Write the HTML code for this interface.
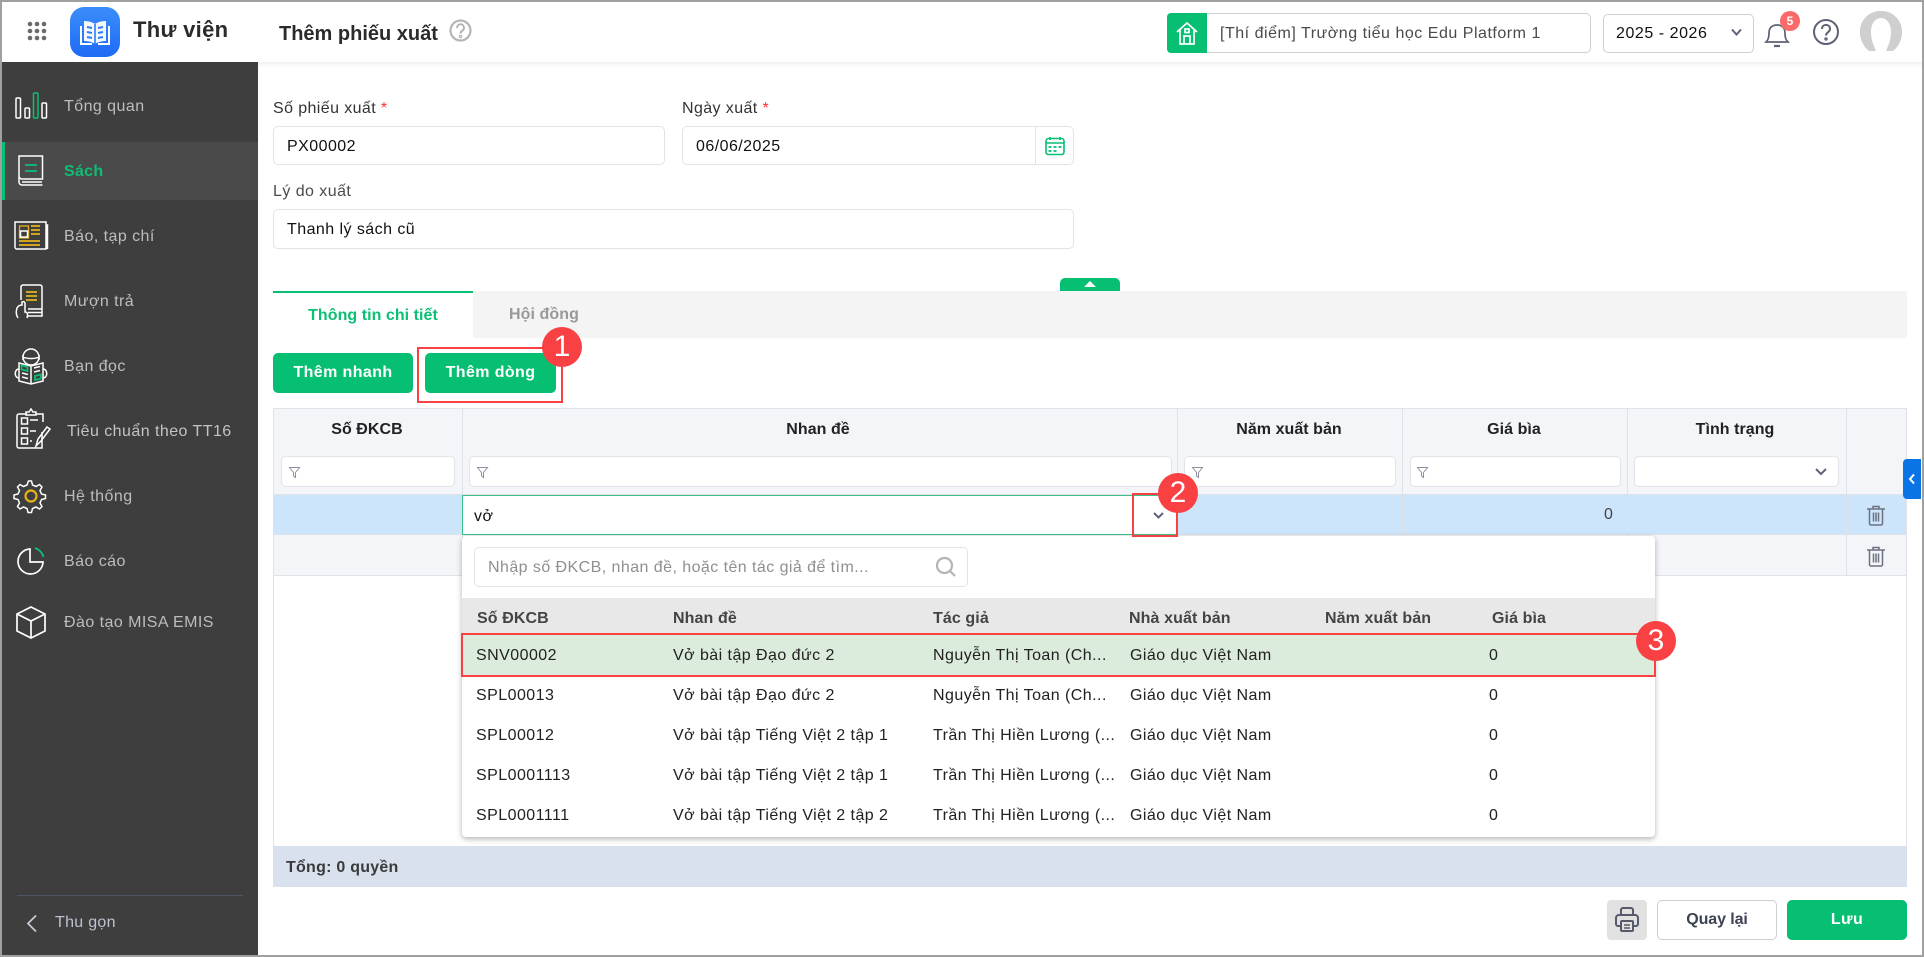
<!DOCTYPE html>
<html lang="vi"><head><meta charset="utf-8"><title>Thêm phiếu xuất</title>
<style>
*{box-sizing:border-box}
html,body{margin:0;padding:0;width:1924px;height:957px;overflow:hidden;background:#fff;font-family:"Liberation Sans",sans-serif;font-size:16px;color:#212121}
.a{position:absolute}
.t{position:absolute;white-space:nowrap;transform:translateY(calc(-50% + 1px));letter-spacing:.45px;line-height:20px}
.c{transform:translate(-50%,calc(-50% + 1px))}
.b{font-weight:700}
.nav{color:#bdbdbd}
.box{position:absolute;background:#fff;border:1px solid #e2e3e8;border-radius:5px}
.btn{position:absolute;background:#06bf72;border-radius:5px;height:40px;color:#fff;font-weight:700;text-align:center;line-height:40px;letter-spacing:.4px}
.red{position:absolute;border:2px solid #f94144}
.num{position:absolute;width:40px;height:40px;border-radius:50%;background:#f94144;color:#fff;font-size:30px;line-height:40px;text-align:center;margin:-20px 0 0 -20px;z-index:9}
.l{position:absolute;background:#e0e2ea}
svg{position:absolute;overflow:visible}
</style></head><body>

<!-- header -->
<div class="a" style="left:0;top:0;width:1924px;height:62px;background:#fff;box-shadow:0 1px 6px rgba(0,0,0,.1)"></div>
<svg style="left:27px;top:21px" width="20" height="20" fill="#6b6b6b"><circle cx="3" cy="3" r="2.3"/><circle cx="10" cy="3" r="2.3"/><circle cx="17" cy="3" r="2.3"/><circle cx="3" cy="10" r="2.3"/><circle cx="10" cy="10" r="2.3"/><circle cx="17" cy="10" r="2.3"/><circle cx="3" cy="17" r="2.3"/><circle cx="10" cy="17" r="2.3"/><circle cx="17" cy="17" r="2.3"/></svg>
<div class="a" style="left:70px;top:7px;width:50px;height:50px;border-radius:14px;background:linear-gradient(#3b8dfb,#1f6bf5)"></div>
<svg style="left:70px;top:7px" width="50" height="50" fill="none" stroke="#fff"><path d="M25 17c-3-2-7-3-11-3v20c4 0 8 1 11 3 3-2 7-3 11-3V14c-4 0-8 1-11 3z" fill="#fff" stroke="none" opacity=".95"/><path d="M25 17v20" stroke="#2f7bf8" stroke-width="1.6"/><path d="M17 20l5 1M17 25l5 1M17 30l5 1M33 20l-5 1M33 25l-5 1M33 30l-5 1" stroke="#2f7bf8" stroke-width="2"/><path d="M11 19v18h11M39 19v18H28" stroke-width="2"/></svg>
<div class="t b" style="left:133px;top:29px;font-size:22px;color:#2b2b2b;letter-spacing:.3px">Thư viện</div>
<div class="t b" style="left:279px;top:33px;font-size:20px;color:#2b2b2b;letter-spacing:0">Thêm phiếu xuất</div>
<svg style="left:449px;top:19px" width="23" height="23" fill="none" stroke="#b5b5b5" stroke-width="2.2"><circle cx="11.5" cy="11.5" r="10"/><path d="M8 9c0-5 7-5 7 0 0 3-3.500 2.500-3.500 5.500" stroke-width="2"/><circle cx="11.500" cy="17.500" r=".6"/></svg>

<div class="box" style="left:1167px;top:13px;width:424px;height:40px;border-color:#cfcfcf"></div>
<div class="a" style="left:1167px;top:13px;width:40px;height:40px;background:#06bf72;border-radius:4px 0 0 4px"></div>
<svg style="left:1176px;top:21px" width="24" height="25" fill="none" stroke="#fff" stroke-width="1.700"><path d="M1 11L11 2l10 9M4 9v14h14V9"/><path d="M8 23v-8h6v8"/><rect x="9" y="8" width="4" height="3.500"/></svg>
<div class="t" style="left:1220px;top:33px;color:#4a4a4a;letter-spacing:.52px">[Thí điểm] Trường tiểu học Edu Platform 1</div>
<div class="box" style="left:1603px;top:14px;width:151px;height:39px;border-color:#cfcfcf"></div>
<div class="t" style="left:1616px;top:33px;color:#111;letter-spacing:.55px">2025 - 2026</div>
<svg style="left:1730px;top:28px" width="13" height="9" fill="none" stroke="#5d6375" stroke-width="2"><path d="M2 1.500l4.500 5 4.500-5"/></svg>
<svg style="left:1764px;top:18px" width="26" height="30" fill="none" stroke="#5d6375" stroke-width="1.700"><path d="M2 24c2-2 3-4 3-9 0-5 3-8 8-8 5 0 8 3 8 8 0 5 1 7 3 9z"/><path d="M10 28h6" stroke-width="2.200"/></svg>
<div class="a" style="left:1780px;top:11px;width:20px;height:20px;border-radius:50%;background:#fb6a6a;color:#fff;font-size:12px;font-weight:700;text-align:center;line-height:20px">5</div>
<svg style="left:1813px;top:19px" width="26" height="26" fill="none" stroke="#5d6375" stroke-width="2"><circle cx="13" cy="13" r="12"/><path d="M9 10c0-5.500 8-5.500 8 0 0 3.500-4 3-4 6.500"/><circle cx="13" cy="20" r=".7"/></svg>
<svg style="left:1860px;top:11px" width="42" height="40"><path d="M21 0C9 0 0 9 0 21c0 8 4 15 9 19h6c-4-6-7-11-7-19C8 13 14 7 21 7s13 6 13 14c0 8-3 13-7 19h6c5-4 9-11 9-19C42 9 33 0 21 0z" fill="#cfcfcf"/><ellipse cx="21" cy="22" rx="13" ry="17" fill="#fff"/><path d="M21 0C9 0 0 9 0 21c0 8 4 15 9 19h7c-3-7-5-12-5-19C11 13 15 7 21 7s10 6 10 14c0 7-2 12-5 19h7c5-4 9-11 9-19C42 9 33 0 21 0z" fill="#cfcfcf"/></svg>

<!-- sidebar -->
<div class="a" style="left:2px;top:62px;width:256px;height:893px;background:#3e3e3e"></div>
<div class="a" style="left:2px;top:142px;width:256px;height:58px;background:#4a4a4a"></div>
<div class="a" style="left:2px;top:142px;width:3px;height:58px;background:#06bf72"></div>
<div class="t nav" style="left:64px;top:106px">Tổng quan</div>
<div class="t b" style="left:64px;top:171px;color:#0cbf73;letter-spacing:.3px">Sách</div>
<div class="t nav" style="left:64px;top:236px">Báo, tạp chí</div>
<div class="t nav" style="left:64px;top:301px">Mượn trả</div>
<div class="t nav" style="left:64px;top:366px">Bạn đọc</div>
<div class="t nav" style="left:67px;top:431px;color:#c3c3c3">Tiêu chuẩn theo TT16</div>
<div class="t nav" style="left:64px;top:496px">Hệ thống</div>
<div class="t nav" style="left:64px;top:561px">Báo cáo</div>
<div class="t nav" style="left:64px;top:622px">Đào tạo MISA EMIS</div>

<svg style="left:0;top:0" width="60" height="660" fill="none" stroke="#fff" stroke-width="1.500">
<rect x="16" y="98" width="4.500" height="20" rx="1"/><rect x="25" y="108" width="4.500" height="10" rx="1"/><rect x="33.500" y="93" width="4.500" height="25" rx="1" stroke="#0cbf73"/><rect x="42" y="103" width="4.500" height="15" rx="1"/>
<path d="M42.500 179H22a3 3 0 0 1-3-3V156h23.500zM19 176v6a3 3 0 0 0 3 3h20.500M22 182h20" /><path d="M25 165h12M25 171h12" stroke="#0cbf73" stroke-width="1.800"/>
<path d="M15 222h31v27H17a2 2 0 0 1-2-2zM46 225h1.500v24" /><path d="M31 226h9M31 230h9M31 234h9M19 241h21M19 245h21" stroke="#e6b21c" stroke-width="1.700"/><rect x="19.500" y="226" width="9" height="12" fill="#3e3e3e" stroke="#e6b21c" stroke-width="1.300"/><rect x="20.500" y="231" width="7" height="6" stroke="#fff"/>
<path d="M21 300v-13a2 2 0 0 1 2-2h17a2 2 0 0 1 2 2v29H27M28 309h14M28 312.500h14"/><path d="M26 292h11M26 296h11M26 300h11" stroke="#e6b21c" stroke-width="1.700"/><path d="M18 318c-2-3-2-7-1-10 1-2 3-3 5-3v-3c2-1 3 0 3 2v8c3 0 3 3 2 6"/>
<g transform="translate(0 18)"><ellipse cx="31" cy="339" rx="8" ry="8"/><path d="M23 337v5M39 337v5M23 339c4 2 12 2 16 0"/><path d="M19 345l12 3 12-3v18l-12 3-12-3zM31 348v18M19 351c-5 0-5 9 0 9M43 351c5 0 5 9 0 9M22 355l6 1.500M22 359l6 1.500M34 350l6-1.500M34 354l6-1.500"/><path d="M21.500 347.500l6 1.500v4l-6-1.500zM35 358l6-1.500v4l-6 1.500z" stroke="#0cbf73" stroke-width="1.700"/></g>
<path d="M27 414h-8a2 2 0 0 0-2 2v30a2 2 0 0 0 2 2h23V432M36 414h7v8M26 415v-3h3l2-3 2 3h3v3z"/><rect x="21.500" y="418" width="6" height="6"/><rect x="21.500" y="428" width="6" height="6"/><rect x="21.500" y="438" width="6" height="6"/><path d="M30 420h8M30 431h6M30 441h2M36 446l2-7 9-12 3 2-9 12z"/>
<path d="M28.500 481l3 0 1 4 3.500 1.500 3.500-2 2.500 2.500-2 3.500 1.500 3.500 4 1v3.500l-4 1-1.500 3.500 2 3.500-2.500 2.500-3.500-2-3.500 1.500-1 4h-3.500l-1-4-3.500-1.500-3.500 2-2.500-2.500 2-3.500-1.500-3.500-4-1v-3.500l4-1 1.500-3.500-2-3.500 2.500-2.500 3.500 2 3.500-1.500z"/><circle cx="31" cy="496" r="5.500" stroke="#e6b21c" stroke-width="2.200"/>
<path d="M30 549a12.500 12.500 0 1 0 13 13H30z" stroke-width="1.700"/><path d="M35 548a13 13 0 0 1 8.500 9" stroke="#0cbf73" stroke-width="1.800"/>
<path d="M31 607l14 7v17l-14 7-14-7v-17zM17 614l14 7 14-7M31 621v17" stroke-width="1.700"/>
</svg>

<div class="a" style="left:17px;top:895px;width:226px;height:1px;background:#4e5566"></div>
<svg style="left:26px;top:914px" width="12" height="19" fill="none" stroke="#c5c9d2" stroke-width="1.800"><path d="M10 1.500L2 9.500l8 8"/></svg>
<div class="t" style="left:55px;top:922px;color:#bcc2d0;letter-spacing:.3px">Thu gọn</div>

<!-- form -->
<div class="t" style="left:273px;top:108px;color:#333;letter-spacing:.4px">Số phiếu xuất <span style="color:#f33">*</span></div>
<div class="t" style="left:682px;top:108px;color:#333;letter-spacing:.4px">Ngày xuất <span style="color:#f33">*</span></div>
<div class="box" style="left:273px;top:126px;width:392px;height:39px"></div>
<div class="t" style="left:287px;top:146px;color:#111">PX00002</div>
<div class="box" style="left:682px;top:126px;width:392px;height:39px"></div>
<div class="l" style="left:1035px;top:127px;width:1px;height:37px;background:#e2e3e8"></div>
<div class="t" style="left:696px;top:146px;color:#111">06/06/2025</div>
<svg style="left:1045px;top:137px" width="20" height="18" fill="none" stroke="#06bf72" stroke-width="1.600"><rect x="1" y="1.500" width="18" height="16" rx="2.500"/><path d="M1 6h18M5 0v3M15 0v3" /><path d="M3.500 10h3M8.500 10h3M13.500 10h3M3.500 14h3M8.500 14h3" stroke-width="1.800"/></svg>
<div class="t" style="left:273px;top:191px;color:#4a4a4a">Lý do xuất</div>
<div class="box" style="left:273px;top:209px;width:801px;height:40px"></div>
<div class="t" style="left:287px;top:229px;color:#111">Thanh lý sách cũ</div>
<div class="a" style="left:1060px;top:278px;width:60px;height:13px;background:#06bf72;border-radius:5px 5px 0 0"></div>
<div class="a" style="left:1084px;top:281px;width:0;height:0;border:6px solid transparent;border-top:0;border-bottom:6px solid #fff"></div>

<!-- tabs -->
<div class="a" style="left:473px;top:291px;width:1434px;height:47px;background:#f4f4f4"></div>
<div class="a" style="left:273px;top:291px;width:200px;height:2px;background:#06bf72"></div>
<div class="t b c" style="left:373px;top:315px;color:#0cbf73;letter-spacing:.05px">Thông tin chi tiết</div>
<div class="t b c" style="left:544px;top:314px;color:#999;letter-spacing:.1px">Hội đồng</div>
<div class="btn" style="left:273px;top:353px;width:140px">Thêm nhanh</div>
<div class="btn" style="left:425px;top:353px;width:131px">Thêm dòng</div>
<div class="red" style="left:417px;top:347px;width:146px;height:56px"></div>

<!-- table -->
<div class="a" style="left:273px;top:408px;width:1634px;height:167px;background:#f3f5f9"></div>
<div class="a" style="left:273px;top:495px;width:1634px;height:39px;background:#cce5fb"></div>
<div class="l" style="left:273px;top:408px;width:1634px;height:1px"></div>
<div class="l" style="left:273px;top:494px;width:1634px;height:1px"></div>
<div class="l" style="left:273px;top:534px;width:1634px;height:1px"></div>
<div class="l" style="left:273px;top:575px;width:1634px;height:1px"></div>
<div class="l" style="left:273px;top:408px;width:1px;height:438px"></div>
<div class="l" style="left:1906px;top:408px;width:1px;height:438px"></div>
<div class="l" style="left:462px;top:408px;width:1px;height:167px"></div>
<div class="l" style="left:1177px;top:408px;width:1px;height:167px"></div>
<div class="l" style="left:1402px;top:408px;width:1px;height:167px"></div>
<div class="l" style="left:1627px;top:408px;width:1px;height:167px"></div>
<div class="l" style="left:1846px;top:408px;width:1px;height:167px"></div>
<div class="t b c" style="left:367px;top:429px;color:#222;letter-spacing:.05px">Số ĐKCB</div>
<div class="t b c" style="left:818px;top:429px;color:#222;letter-spacing:.05px">Nhan đề</div>
<div class="t b c" style="left:1289px;top:429px;color:#222;letter-spacing:.05px">Năm xuất bản</div>
<div class="t b c" style="left:1514px;top:429px;color:#222;letter-spacing:.05px">Giá bìa</div>
<div class="t b c" style="left:1735px;top:429px;color:#222;letter-spacing:.05px">Tình trạng</div>
<div class="box" style="left:281px;top:456px;width:174px;height:31px"></div>
<div class="box" style="left:469px;top:456px;width:703px;height:31px"></div>
<div class="box" style="left:1184px;top:456px;width:212px;height:31px"></div>
<div class="box" style="left:1410px;top:456px;width:211px;height:31px"></div>
<div class="box" style="left:1634px;top:456px;width:205px;height:31px"></div>
<svg style="left:0;top:1px" width="1500" height="500" fill="none" stroke="#8d90a0" stroke-width="1"><path d="M289.500 466.500h10l-4 5v5l-2-1.500v-3.500z"/><path d="M477.500 466.500h10l-4 5v5l-2-1.500v-3.500zM1192.500 466.500h10l-4 5v5l-2-1.500v-3.500zM1417.500 466.500h10l-4 5v5l-2-1.500v-3.500z"/></svg>
<svg style="left:1814px;top:467px" width="14" height="10" fill="none" stroke="#5d6375" stroke-width="2"><path d="M2 2l5 5 5-5"/></svg>
<div class="a" style="left:462px;top:495px;width:716px;height:40px;background:#fff;border:1px solid #3cc08a"></div>
<div class="t" style="left:474px;top:516px;color:#111">vở</div>
<svg style="left:1152px;top:511px" width="13" height="9" fill="none" stroke="#5d6375" stroke-width="2"><path d="M2 2l4.500 4.500L11 2"/></svg>
<div class="t" style="left:1604px;top:514px;color:#444">0</div>
<svg style="left:1866px;top:505px" width="20" height="21" fill="none" stroke="#6d7280" stroke-width="1.500"><path d="M1 4h18M7 4V1.500h6V4M3.500 4v14.500a1.500 1.500 0 0 0 1.500 1.500h10a1.500 1.500 0 0 0 1.500-1.500V4M7.500 7.500v9M10 7.500v9M12.500 7.500v9"/></svg>
<svg style="left:1866px;top:546px" width="20" height="21" fill="none" stroke="#6d7280" stroke-width="1.500"><path d="M1 4h18M7 4V1.500h6V4M3.500 4v14.500a1.500 1.500 0 0 0 1.500 1.500h10a1.500 1.500 0 0 0 1.500-1.500V4M7.500 7.500v9M10 7.500v9M12.500 7.500v9"/></svg>
<div class="a" style="left:1903px;top:459px;width:18px;height:40px;background:#0b74e5;border-radius:4px 0 0 4px"></div>
<svg style="left:1908px;top:473px" width="8" height="12" fill="none" stroke="#fff" stroke-width="2"><path d="M6 1.500L2 6l4 4.500"/></svg>

<!-- footer row -->
<div class="a" style="left:273px;top:846px;width:1634px;height:41px;background:#d9e1ee"></div>
<div class="t b" style="left:286px;top:867px;color:#3a3a3a;letter-spacing:.25px">Tổng: 0 quyền</div>

<!-- dropdown -->
<div class="a" style="left:462px;top:536px;width:1193px;height:301px;background:#fff;border-radius:4px;box-shadow:0 2px 6px rgba(0,0,0,.3)"></div>
<div class="box" style="left:474px;top:547px;width:494px;height:40px"></div>
<div class="t" style="left:488px;top:567px;color:#8f8f8f;letter-spacing:.44px">Nhập số ĐKCB, nhan đề, hoặc tên tác giả để tìm...</div>
<svg style="left:935px;top:556px" width="22" height="22" fill="none" stroke="#b4b4b4" stroke-width="2.200"><circle cx="9.500" cy="9.500" r="7.500"/><path d="M15 15l5 5"/></svg>
<div class="a" style="left:462px;top:598px;width:1193px;height:36px;background:#e8e8e8"></div>
<div class="t b" style="left:477px;top:618px;color:#444;letter-spacing:.1px">Số ĐKCB</div>
<div class="t b" style="left:673px;top:618px;color:#444;letter-spacing:.1px">Nhan đề</div>
<div class="t b" style="left:933px;top:618px;color:#444;letter-spacing:.1px">Tác giả</div>
<div class="t b" style="left:1129px;top:618px;color:#444;letter-spacing:.1px">Nhà xuất bản</div>
<div class="t b" style="left:1325px;top:618px;color:#444;letter-spacing:.1px">Năm xuất bản</div>
<div class="t b" style="left:1492px;top:618px;color:#444;letter-spacing:.1px">Giá bìa</div>
<div class="a" style="left:462px;top:634px;width:1193px;height:42px;background:#dcecdc"></div>

<div class="t" style="left:476px;top:655px">SNV00002</div><div class="t" style="left:673px;top:655px">Vở bài tập Đạo đức 2</div><div class="t" style="left:933px;top:655px">Nguyễn Thị Toan (Ch...</div><div class="t" style="left:1130px;top:655px">Giáo dục Việt Nam</div><div class="t" style="left:1489px;top:655px">0</div>
<div class="t" style="left:476px;top:695px">SPL00013</div><div class="t" style="left:673px;top:695px">Vở bài tập Đạo đức 2</div><div class="t" style="left:933px;top:695px">Nguyễn Thị Toan (Ch...</div><div class="t" style="left:1130px;top:695px">Giáo dục Việt Nam</div><div class="t" style="left:1489px;top:695px">0</div>
<div class="t" style="left:476px;top:735px">SPL00012</div><div class="t" style="left:673px;top:735px">Vở bài tập Tiếng Việt 2 tập 1</div><div class="t" style="left:933px;top:735px">Trần Thị Hiền Lương (...</div><div class="t" style="left:1130px;top:735px">Giáo dục Việt Nam</div><div class="t" style="left:1489px;top:735px">0</div>
<div class="t" style="left:476px;top:775px">SPL0001113</div><div class="t" style="left:673px;top:775px">Vở bài tập Tiếng Việt 2 tập 1</div><div class="t" style="left:933px;top:775px">Trần Thị Hiền Lương (...</div><div class="t" style="left:1130px;top:775px">Giáo dục Việt Nam</div><div class="t" style="left:1489px;top:775px">0</div>
<div class="t" style="left:476px;top:815px">SPL0001111</div><div class="t" style="left:673px;top:815px">Vở bài tập Tiếng Việt 2 tập 2</div><div class="t" style="left:933px;top:815px">Trần Thị Hiền Lương (...</div><div class="t" style="left:1130px;top:815px">Giáo dục Việt Nam</div><div class="t" style="left:1489px;top:815px">0</div>

<div class="red" style="left:461px;top:633px;width:1195px;height:44px"></div>
<div class="red" style="left:1132px;top:493px;width:46px;height:44px"></div>
<div class="num" style="left:562px;top:347px">1</div>
<div class="num" style="left:1178px;top:493px">2</div>
<div class="num" style="left:1656px;top:641px">3</div>

<!-- bottom buttons -->
<div class="a" style="left:1607px;top:900px;width:40px;height:40px;background:#e1e1e1;border-radius:4px"></div>
<svg style="left:1615px;top:907px" width="24" height="26" fill="none" stroke="#565a6b" stroke-width="2"><path d="M6 8V3a2 2 0 0 1 2-2h8a2 2 0 0 1 2 2v5M6 19H3a2 2 0 0 1-2-2v-6a3 3 0 0 1 3-3h16a3 3 0 0 1 3 3v6a2 2 0 0 1-2 2h-3"/><rect x="6" y="14" width="12" height="10" rx="1"/><path d="M9 18h6M9 21h6" stroke-width="1.500"/></svg>
<div class="a" style="left:1657px;top:900px;width:120px;height:40px;border:1px solid #cfcfcf;border-radius:5px;text-align:center;line-height:38px;font-weight:700;color:#3d4354;letter-spacing:-.1px">Quay lại</div>
<div class="btn" style="left:1787px;top:900px;width:120px">Lưu</div>

<!-- screenshot frame -->
<div class="a" style="left:0;top:0;width:1924px;height:957px;border:2px solid #a0a0a0;z-index:20"></div>
</body></html>
